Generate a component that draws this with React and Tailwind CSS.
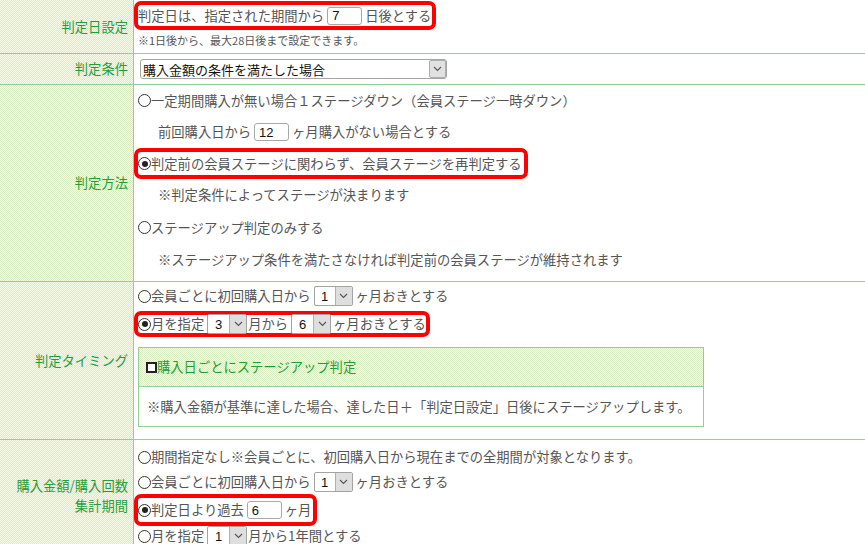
const pattern =
  "bg-[#f6fbe7] bg-[image:conic-gradient(#d9edc1_25%,transparent_0_50%,#d9edc1_0_75%,transparent_0)] bg-[length:2px_2px]";

function Chevron() {
  return (
    <svg width="9" height="6" viewBox="0 0 9 6">
      <path d="M1 1L4.5 4.5L8 1" stroke="#555" strokeWidth="1.1" fill="none" />
    </svg>
  );
}

function Radio({ checked }) {
  return (
    <span className="inline-flex items-center justify-center w-[13px] h-[13px] rounded-full border-[1.5px] border-[#333] bg-white shrink-0">
      {checked && <span className="w-[6px] h-[6px] rounded-full bg-[#222]" />}
    </span>
  );
}

function Sel({ v, w = "w-[39px]" }) {
  return (
    <span className={`inline-flex h-[20px] ${w} border border-[#a3a3a3] rounded-[2px] bg-white overflow-hidden shrink-0`}>
      <span className="flex-1 flex items-center justify-center text-[13px] text-[#111] font-['Liberation_Sans',sans-serif]">
        {v}
      </span>
      <span className="w-[17px] flex items-center justify-center bg-[#dedede] border-l border-[#b0b0b0]">
        <Chevron />
      </span>
    </span>
  );
}

function Inp({ v }) {
  return (
    <span className="inline-flex items-center h-[18px] w-[35px] border border-[#a8a8a8] rounded-[3px] bg-white pl-[4px] text-[13px] text-[#111] font-['Liberation_Sans',sans-serif] shrink-0">
      {v}
    </span>
  );
}

function Row({ label, h, children }) {
  return (
    <div className={`flex border-b border-[#8fd19e] ${h}`}>
      <div className={`w-[134px] shrink-0 border-r border-[#8fd19e] flex items-center justify-end pr-[5px] text-[#1f9e3a] ${pattern}`}>
        {label}
      </div>
      <div className="flex-1 flex flex-col items-start">{children}</div>
    </div>
  );
}

export default function App() {
  return (
    <div className="w-[865px] h-[544px] overflow-hidden bg-white font-['Noto_Sans_CJK_JP',sans-serif] text-[13.3px] text-[#555] leading-none">
      {/* 判定日設定 */}
      <Row label="判定日設定" h="h-[54px]">
        <div className="pt-[1px]">
          <div className="inline-flex items-center h-[29px] border-[4px] border-[#ff0000] rounded-[7px] pr-[1px]">
            判定日は、指定された期間から
            <span className="mx-[3px]">
              <Inp v="7" />
            </span>
            日後とする
          </div>
        </div>
        <div className="mt-[3px] pl-[4px] text-[11px] leading-[14px]">※1日後から、最大28日後まで設定できます。</div>
      </Row>

      {/* 判定条件 */}
      <Row label="判定条件" h="h-[31px]">
        <div className="flex-1 flex items-center pl-[6px]">
          <div className="flex items-center h-[20px] w-[307px] border border-[#a6a6a6] rounded-[3px] bg-white">
            <span className="flex-1 pl-[2px] text-[13px] text-[#111]">購入金額の条件を満たした場合</span>
            <span className="w-[17px] h-[18px] flex items-center justify-center bg-[#e1e1e1] border border-[#adadad] rounded-[2px]">
              <Chevron />
            </span>
          </div>
        </div>
      </Row>

      {/* 判定方法 */}
      <Row label="判定方法" h="h-[197px]">
        <div className="flex items-center h-[31px] pl-[4px]">
          <Radio />
          一定期間購入が無い場合１ステージダウン（会員ステージ一時ダウン）
        </div>
        <div className="flex items-center h-[32px] pl-[24px]">
          前回購入日から
          <span className="mx-[3px]">
            <Inp v="12" />
          </span>
          ヶ月購入がない場合とする
        </div>
        <div className="inline-flex items-center h-[31px] border-[4px] border-[#ff0000] rounded-[7px] pr-[2px]">
          <Radio checked />
          判定前の会員ステージに関わらず、会員ステージを再判定する
        </div>
        <div className="flex items-center h-[32px] pl-[24px]">※判定条件によってステージが決まります</div>
        <div className="flex items-center h-[33px] pl-[4px]">
          <Radio />
          ステージアップ判定のみする
        </div>
        <div className="flex items-center h-[32px] pl-[24px]">
          ※ステージアップ条件を満たさなければ判定前の会員ステージが維持されます
        </div>
      </Row>

      {/* 判定タイミング */}
      <Row label="判定タイミング" h="h-[158px]">
        <div className="flex items-center h-[28px] pl-[4px]">
          <Radio />
          会員ごとに初回購入日から
          <span className="mx-[3px] flex">
            <Sel v="1" />
          </span>
          ヶ月おきとする
        </div>
        <div className="mt-[1px] inline-flex items-center h-[26px] border-[4px] border-[#ff0000] rounded-[7px] pr-0">
          <Radio checked />
          月を指定
          <span className="ml-[3px] mr-[1px] flex">
            <Sel v="3" w="w-[40px]" />
          </span>
          月から
          <span className="ml-[3px] mr-[2px] flex">
            <Sel v="6" w="w-[40px]" />
          </span>
          ヶ月おきとする
        </div>
        <div className="mt-[10px] ml-[4px] w-[566px] border border-[#8fd19e]">
          <div className={`flex items-center h-[39px] pl-[7px] border-b border-[#8fd19e] text-[#1f9e3a] ${pattern}`}>
            <span className="w-[11px] h-[11px] border-2 border-[#222] bg-white shrink-0" />
            購入日ごとにステージアップ判定
          </div>
          <div className="flex items-center h-[39px] pl-[8px]">
            ※購入金額が基準に達した場合、達した日＋「判定日設定」日後にステージアップします。
          </div>
        </div>
      </Row>

      {/* 集計期間 */}
      <Row
        label={
          <div className="text-right leading-[20px]">
            購入金額/購入回数
            <br />
            集計期間
          </div>
        }
        h="h-[112px]"
      >
        <div className="pt-[4px]" />
        <div className="flex items-center h-[26px] pl-[4px]">
          <Radio />
          期間指定なし※会員ごとに、初回購入日から現在までの全期間が対象となります。
        </div>
        <div className="flex items-center h-[24px] pl-[4px]">
          <Radio />
          会員ごとに初回購入日から
          <span className="mx-[3px] flex">
            <Sel v="1" />
          </span>
          ヶ月おきとする
        </div>
        <div className="inline-flex items-center h-[32px] border-[4px] border-[#ff0000] rounded-[7px] pr-[2px]">
          <Radio checked />
          判定日より過去
          <span className="mx-[3px]">
            <Inp v="6" />
          </span>
          ヶ月
        </div>
        <div className="flex items-center h-[20px] pl-[4px]">
          <Radio />
          月を指定
          <span className="ml-[3px] mr-[1px] flex">
            <Sel v="1" w="w-[40px]" />
          </span>
          月から1年間とする
        </div>
      </Row>
    </div>
  );
}
